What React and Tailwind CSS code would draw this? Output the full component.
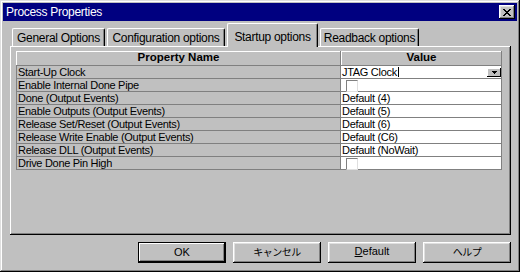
import React from "react";

const font = "font-['Liberation_Sans',Arial,sans-serif]";
const jp = "font-['Noto_Sans_CJK_JP',sans-serif]";
const bevel =
  "shadow-[inset_-1px_-1px_0_#000,inset_1px_1px_0_#fff,inset_-2px_-2px_0_#808080,inset_2px_2px_0_#dfdfdf]";

const rows = [
  ["Start-Up Clock", { type: "select", text: "JTAG Clock" }],
  ["Enable Internal Done Pipe", { type: "check" }],
  ["Done (Output Events)", "Default (4)"],
  ["Enable Outputs (Output Events)", "Default (5)"],
  ["Release Set/Reset (Output Events)", "Default (6)"],
  ["Release Write Enable (Output Events)", "Default (C6)"],
  ["Release DLL (Output Events)", "Default (NoWait)"],
  ["Drive Done Pin High", { type: "check" }],
];

function CloseX() {
  const px = [
    [0, 0], [1, 0], [6, 0], [7, 0],
    [1, 1], [2, 1], [5, 1], [6, 1],
    [2, 2], [3, 2], [4, 2], [5, 2],
    [3, 3], [4, 3],
    [2, 4], [3, 4], [4, 4], [5, 4],
    [1, 5], [2, 5], [5, 5], [6, 5],
    [0, 6], [1, 6], [6, 6], [7, 6],
  ];
  return (
    <svg width="8" height="7" viewBox="0 0 8 7" shapeRendering="crispEdges">
      {px.map(([x, y], i) => (
        <rect key={i} x={x} y={y} width="1" height="1" fill="#000" />
      ))}
    </svg>
  );
}

function Tab({ label, w, active }) {
  return (
    <div
      className={`${w} shrink-0 bg-[#c0c0c0] border-l border-t border-white border-r border-r-black rounded-tl-[2px] rounded-tr-[2px] shadow-[inset_-1px_0_0_#808080] text-center text-[12px] tracking-[-0.3px] leading-[13px] text-black ${
        active ? "h-[24px] -mb-px relative z-10 pt-[7px]" : "h-[18px] pt-[3px]"
      }`}
    >
      {label}
    </div>
  );
}

function Checkbox() {
  return (
    <div className="relative z-10 mt-[1px] ml-[5px] w-[12px] h-[12px] bg-white border-l border-t border-[#808080] border-r-[#dfdfdf] border-b-[#dfdfdf] border-r border-b" />
  );
}

function Value({ v }) {
  if (typeof v === "string") return <span className="pl-[1px]">{v}</span>;
  if (v.type === "check") return <Checkbox />;
  return (
    <div className="flex w-full items-start">
      <span className="pl-[1px]">{v.text}</span>
      <div className="ml-[1px] mt-[1px] w-[1px] h-[10px] bg-black" />
      <div className="flex-1" />
      <div className="mt-[2px] w-[14px] h-[9px] bg-[#c0c0c0] shadow-[inset_-1px_-1px_0_#000,inset_1px_1px_0_#fff] flex items-center justify-center">
        <svg width="6" height="3" viewBox="0 0 6 3" shapeRendering="crispEdges">
          <polygon points="0,0 6,0 3,3" fill="#000" />
        </svg>
      </div>
    </div>
  );
}

export default function App() {
  return (
    <div
      className={`${font} w-[520px] h-[272px] bg-[#c0c0c0] p-[3px] shadow-[inset_-1px_-1px_0_#000,inset_1px_1px_0_#dfdfdf,inset_-2px_-2px_0_#808080,inset_2px_2px_0_#fff] overflow-hidden`}
    >
      {/* Title bar */}
      <div className="h-[18px] bg-[#000080] flex items-start">
        <span className="pl-[3px] text-white text-[12px] tracking-[-0.3px] leading-[18px]">
          Process Properties
        </span>
        <div className="flex-1" />
        <div className={`mt-[2px] mr-[2px] w-[16px] h-[14px] bg-[#c0c0c0] ${bevel} flex items-center justify-center`}>
          <CloseX />
        </div>
      </div>

      {/* Tabs */}
      <div className="mt-[2px] ml-[9px] h-[23px] flex items-end gap-[2px]">
        <Tab label="General Options" w="w-[93px]" />
        <Tab label="Configuration options" w="w-[118px]" />
        <Tab label="Startup options" w="w-[91px]" active />
        <Tab label="Readback options" w="w-[99px]" />
      </div>

      {/* Panel */}
      <div className="ml-[7px] w-[501px] h-[189px] bg-[#c0c0c0] shadow-[inset_-1px_-1px_0_#000,inset_1px_1px_0_#fff,inset_-2px_-2px_0_#808080] pl-[6px] pt-[5px]">
        <div className="w-[486px] text-[11px] tracking-[-0.3px] text-black">
          {/* header */}
          <div className="flex h-[15px]">
            <div className="w-[325px] h-[15px] bg-[#c0c0c0] shadow-[inset_-1px_-1px_0_#808080,inset_1px_1px_0_#fff] text-center font-bold text-[11.5px] tracking-normal leading-[13px]">
              Property Name
            </div>
            <div className="w-[161px] h-[15px] bg-[#c0c0c0] shadow-[inset_-1px_-1px_0_#808080,inset_1px_1px_0_#fff] text-center font-bold text-[11.5px] tracking-normal leading-[13px]">
              Value
            </div>
          </div>
          {rows.map(([name, v], i) => (
            <div key={i} className="flex h-[13px] leading-[12px]">
              <div className="w-[325px] h-[13px] border-l border-r border-b border-[#808080] bg-[#c0c0c0] pl-[1px] whitespace-nowrap">
                {name}
              </div>
              <div className="w-[161px] h-[13px] border-r border-b border-[#808080] bg-white flex items-start whitespace-nowrap">
                <Value v={v} />
              </div>
            </div>
          ))}
        </div>
      </div>

      {/* Buttons */}
      <div className="mt-[7px] pr-[6px] flex justify-end gap-[7px] text-[11px] text-black">
        <div className="w-[88px] h-[21px] border border-black">
          <div className="h-[19px] bg-[#c0c0c0] shadow-[inset_-1px_-1px_0_#000,inset_1px_1px_0_#fff,inset_-2px_-2px_0_#808080] text-center leading-[18px]">
            OK
          </div>
        </div>
        <div className={`w-[88px] h-[21px] bg-[#c0c0c0] ${bevel} text-center leading-[20px] ${jp} text-[10px] tracking-[-0.5px]`}>
          キャンセル
        </div>
        <div className={`w-[88px] h-[21px] bg-[#c0c0c0] ${bevel} text-center leading-[19px]`}>
          <span className="underline">D</span>efault
        </div>
        <div className={`w-[88px] h-[21px] bg-[#c0c0c0] ${bevel} text-center leading-[20px] ${jp} text-[10px] tracking-[-0.5px]`}>
          ヘルプ
        </div>
      </div>
    </div>
  );
}
